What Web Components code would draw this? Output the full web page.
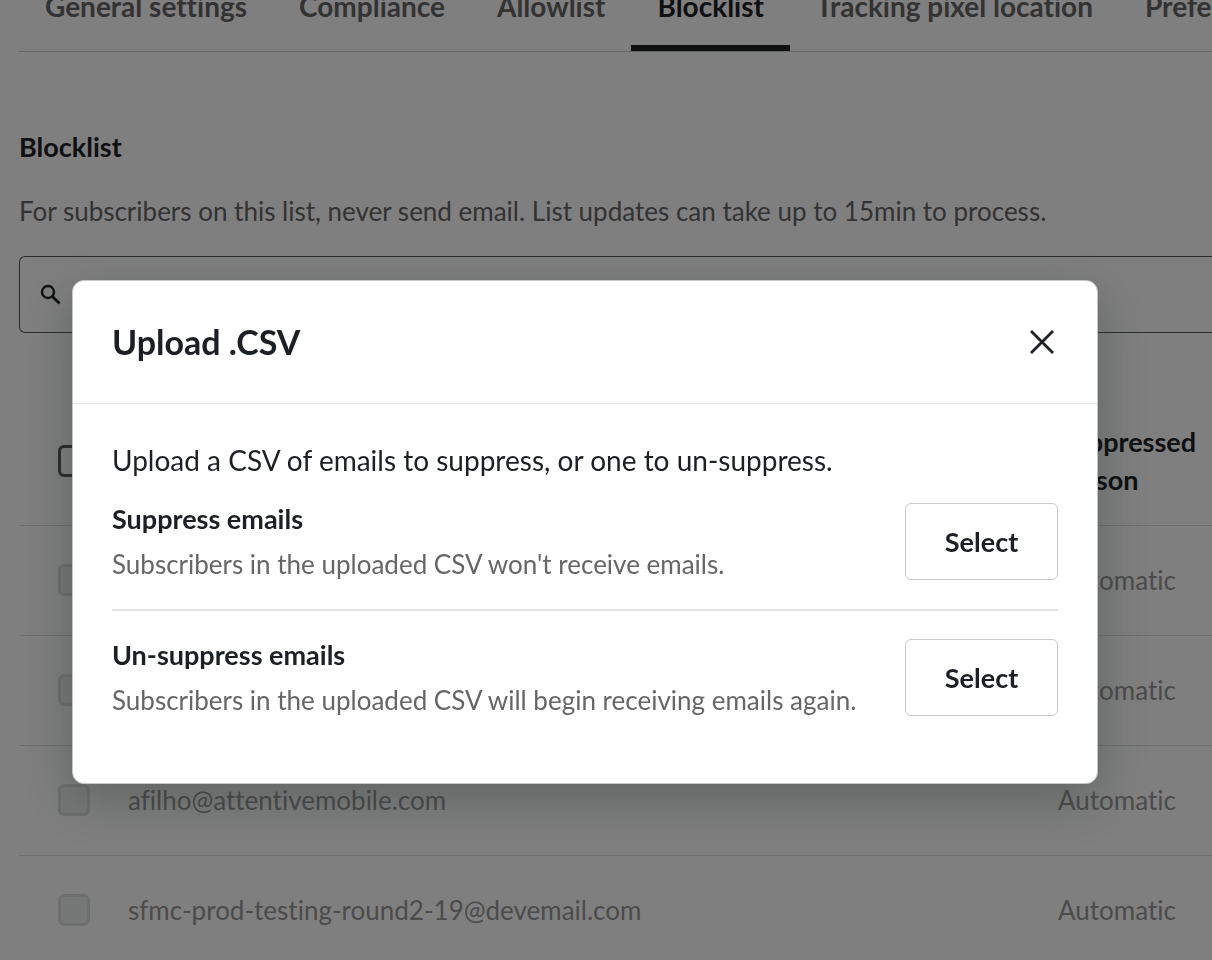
<!DOCTYPE html>
<html lang="en">
<head>
<meta charset="utf-8">
<meta name="viewport" content="width=device-width, initial-scale=1">
<title>Blocklist</title>
<style>
  :root {
    --ink: #1c2024;
    --muted: #666666;
    --faint: #979797;
    --hair: #dadedd;
    --size-heading: 27px;
    --size-large: 28px;
  }
  html, body { height: 100%; }
  body {
    margin: 0;
    overflow: hidden;
    background: #fff;
    color: var(--ink);
    font: 26px/38px Lato, "Open Sans", sans-serif;
    font-variant-ligatures: none;
  }
</style>
</head>
<body>
<settings-page></settings-page>
<modal-dialog heading="Upload .CSV">
  <upload-option heading="Suppress emails">Subscribers in the uploaded CSV won't receive emails.</upload-option>
  <upload-option heading="Un-suppress emails">Subscribers in the uploaded CSV will begin receiving emails again.</upload-option>
  <span slot="intro">Upload a CSV of emails to suppress, or one to un-suppress.</span>
</modal-dialog>

<script>
const define = (name, render) => customElements.define(name, class extends HTMLElement {
  connectedCallback() {
    if (this.shadowRoot) return;
    this.attachShadow({ mode: 'open' }).innerHTML = render(this);
  }
});

define('tab-bar', () => `
  <style>
    :host { display: block; border-bottom: 1px solid #c8cccb; }
    nav { display: flex; }
    ::slotted(tab-link) { flex: none; }
  </style>
  <nav aria-label="Settings"><slot></slot></nav>`);

define('tab-link', el => `
  <style>
    :host { display: block; }
    a {
      display: block; padding: 0 26px 20px; border-bottom: 6px solid transparent;
      color: var(--muted); font-size: var(--size-large); font-weight: 700;
      text-decoration: none; white-space: nowrap;
    }
    a[aria-current] { color: var(--ink); border-color: var(--ink); }
  </style>
  <a href="#"${el.hasAttribute('active') ? ' aria-current="page"' : ''}><slot></slot></a>`);

define('search-field', () => `
  <style>
    :host {
      display: flex; align-items: center; gap: 16px; box-sizing: border-box; height: 77px;
      padding-left: 20px; border: 1px solid #555857; border-right: 0; border-radius: 6px 0 0 6px;
    }
    svg { flex: none; width: 22px; height: 22px; }
    input { flex: 1; min-width: 0; border: 0; outline: 0; background: none; font: inherit; color: inherit; }
  </style>
  <svg viewBox="0 0 22 22" fill="none" stroke="#1c2024" aria-hidden="true">
    <circle cx="8" cy="8" r="6" stroke-width="2.4"/>
    <path d="M12.4 12.4 19.6 19.6" stroke-width="2.8"/>
  </svg>
  <input type="search" aria-label="Search blocklist">`);

define('check-box', el => `
  <style>
    :host { display: block; width: 32px; height: 32px; }
    input {
      appearance: none; display: block; box-sizing: border-box; width: 100%; height: 100%;
      margin: 0; border: 3px solid #555857; border-radius: 6px; background: #fff;
    }
    input:disabled { border-color: #dbe0de; background: #edf1f0; }
  </style>
  <input type="checkbox" aria-label="${el.getAttribute('label')}"${el.hasAttribute('disabled') ? ' disabled' : ''}>`);

define('blocklist-table', () => {
  const rows = ['', '', 'afilho@attentivemobile.com', 'sfmc-prod-testing-round2-19@devemail.com', ''];
  return `
  <style>
    :host { display: block; }
    table { width: 100%; border-collapse: separate; border-spacing: 0; table-layout: fixed; }
    .pick { width: 109px; }
    .reason { width: 154px; }
    th, td { box-sizing: border-box; padding: 0 0 2px; border-bottom: 1px solid var(--hair); text-align: left; font-weight: 400; }
    th { height: 127px; font-size: var(--size-heading); font-weight: 700; }
    td { height: 110px; color: var(--faint); }
    check-box { margin-left: 39px; }
  </style>
  <table>
    <thead><tr>
      <th class="pick"><check-box label="Select all"></check-box></th>
      <th></th>
      <th class="reason">Suppressed reason</th>
    </tr></thead>
    <tbody>${rows.map((email, i) => `<tr>
      <td><check-box disabled label="Select row ${i + 1}"></check-box></td>
      <td>${email}</td>
      <td>Automatic</td>
    </tr>`).join('')}</tbody>
  </table>`;
});

define('settings-page', () => `
  <style>
    :host { display: block; height: 100%; overflow: hidden; }
    main { margin: -13px 0 0 19px; }
    h2 { margin: 76px 0 0; font-size: var(--size-heading); font-weight: 700; }
    p { margin: 26px 0; color: var(--muted); }
    blocklist-table { margin-top: 66px; }
  </style>
  <main>
    <tab-bar>
      <tab-link>General settings</tab-link>
      <tab-link>Compliance</tab-link>
      <tab-link>Allowlist</tab-link>
      <tab-link active>Blocklist</tab-link>
      <tab-link>Tracking pixel location</tab-link>
      <tab-link>Preferences</tab-link>
    </tab-bar>
    <h2>Blocklist</h2>
    <p>For subscribers on this list, never send email. List updates can take up to 15min to process.</p>
    <search-field></search-field>
    <blocklist-table></blocklist-table>
  </main>`);

define('modal-dialog', el => `
  <style>
    :host {
      position: fixed; inset: 0; display: block; box-sizing: border-box;
      padding: 280px 114px 0 72px; background: rgba(0, 0, 0, .5);
    }
    section {
      border: 1px solid #c4c6c6; border-radius: 12px; background: #fff;
      box-shadow: 0 16px 52px rgba(30, 44, 40, .33);
    }
    header {
      display: flex; align-items: center; justify-content: space-between; box-sizing: border-box;
      height: 123px; padding: 0 39px; border-bottom: 1px solid #e2e4e4;
    }
    h1 { margin: 0; font-size: 34px; font-weight: 700; }
    button { display: grid; place-items: center; width: 32px; height: 32px; padding: 0; border: 0; background: none; }
    .body { padding: 37px 39px 64px; }
    p { margin: 0 0 21px; font-size: var(--size-large); }
  </style>
  <section role="dialog" aria-modal="true" aria-labelledby="title">
    <header>
      <h1 id="title">${el.getAttribute('heading')}</h1>
      <button type="button" aria-label="Close">
        <svg width="26" height="26" viewBox="0 0 26 26" fill="none" stroke="#1c2024" stroke-width="2.8" aria-hidden="true">
          <path d="M2 2 24 24M24 2 2 24"/>
        </svg>
      </button>
    </header>
    <div class="body">
      <p><slot name="intro"></slot></p>
      <slot></slot>
    </div>
  </section>`);

define('upload-option', el => `
  <style>
    :host { display: flex; align-items: center; justify-content: space-between; gap: 24px; }
    :host(:not(:first-of-type)) { margin-top: 26px; padding-top: 25px; border-top: 2px solid #e2e3e3; }
    h2 { margin: 0 0 7px; font-size: var(--size-heading); font-weight: 700; }
    p { margin: 0; color: var(--muted); }
    button {
      flex: none; box-sizing: border-box; width: 153px; height: 77px; padding: 0;
      border: 1px solid #c8caca; border-radius: 6px; background: #fff;
      color: inherit; font: inherit; font-size: var(--size-heading); font-weight: 700;
    }
  </style>
  <div>
    <h2>${el.getAttribute('heading')}</h2>
    <p><slot></slot></p>
  </div>
  <button type="button">Select</button>`);
</script>
</body>
</html>
